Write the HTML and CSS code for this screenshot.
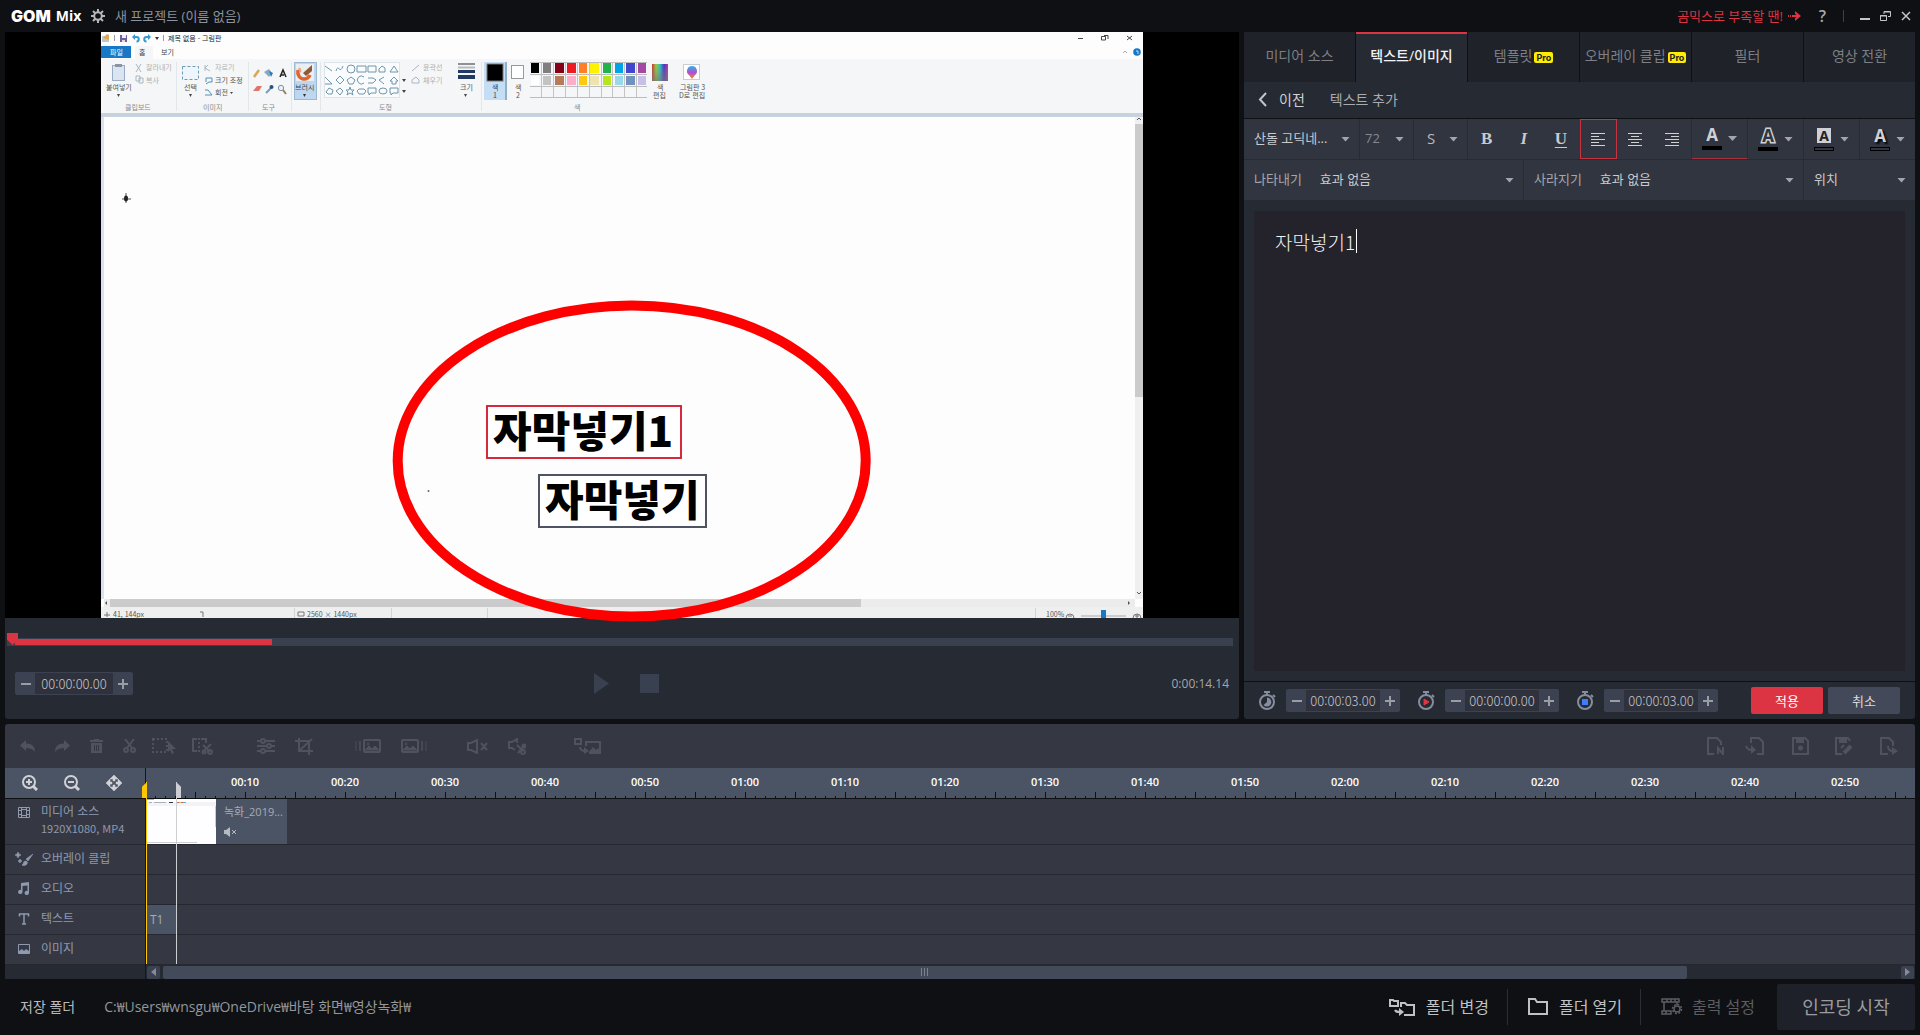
FILE: index.html
```html
<!DOCTYPE html>
<html lang="ko">
<head>
<meta charset="utf-8">
<title>GOM Mix</title>
<link rel="stylesheet" href="styles.css">
</head>
<body>
<header class="titlebar">
  <div class="logo"><span class="logo-gom">GOM</span><span class="logo-mix">Mix</span></div>
  <button class="icon-btn gear" aria-label="설정">
    <svg width="14" height="14" viewBox="0 0 14 14"><circle cx="7" cy="7" r="3.8" fill="none" stroke="#b4b6ba" stroke-width="2"/><path d="M7 0v3M7 11v3M0 7h3M11 7h3M2 2l2.200 2.200M9.800 9.800L12 12M12 2L9.800 4.200M2 12l2.200-2.200" stroke="#b4b6ba" stroke-width="2"/></svg>
  </button>
  <h1 class="project">새 프로젝트 (이름 없음)</h1>
  <a class="promo" href="#">곰믹스로 부족할 땐!
    <svg width="13" height="10" viewBox="0 0 13 10"><path d="M0 5h1M2 5h1M4 5h5" stroke="#dc3442" stroke-width="2"/><path d="M7 0l6 5-6 5V7.500L9 5 7 2.500z" fill="#dc3442"/></svg></a>
  <button class="icon-btn help" aria-label="도움말">?</button>
  <span class="title-sep"></span>
  <div class="win-buttons">
    <button class="icon-btn" aria-label="최소화"><svg width="10" height="10" viewBox="0 0 10 10"><path d="M0 8h10" stroke="#c4c6ca" stroke-width="2"/></svg></button>
    <button class="icon-btn" aria-label="이전 크기로"><svg width="11" height="10" viewBox="0 0 11 10" fill="none" stroke="#c4c6ca"><path d="M.5 4.500h6v5h-6zM4 3V.5h6.500v5H8M4 1h6M0 5h7"/></svg></button>
    <button class="icon-btn" aria-label="닫기"><svg width="10" height="10" viewBox="0 0 10 10"><path d="M1 1l8 8M9 1L1 9" stroke="#c4c6ca" stroke-width="1.500"/></svg></button>
  </div>
</header>

<main class="workspace">
  <section class="preview" aria-label="미리보기">
    <div class="stage">
      <svg class="frame" viewBox="101 32 1042 586">
        <rect x="101" y="32" width="1042" height="586" fill="#fdfdfd"/>
        <rect x="101" y="59" width="1042" height="54" fill="#f4f6f7"/>
        <rect x="101" y="113" width="1042" height="4" fill="#c8d2de"/>
        <rect x="101" y="117" width="3" height="482" fill="#d9e2f3"/>
        <g class="quick">
          <path d="M102 36h7v6h-7z" fill="#b9c7cf"/><path d="M103 38l4-4 2 1v5z" fill="#e0a64c"/>
          <path d="M114.500 35v6M163.500 35v6" stroke="#999"/>
          <path d="M120 35h7v7h-7z" fill="#6f5f9c"/><path d="M122 35h4v3h-4z" fill="#eee"/><path d="M122 40h3v2h-3z" fill="#ddd"/>
          <path d="M134 37h2.500a2 2 0 0 1 0 4.500M149 37h-2.500a2 2 0 0 0 0 4.500" fill="none" stroke="#2f9bd2" stroke-width="2"/>
          <path d="M132 37l3-3v6zM151 37l-3-3v6z" fill="#2f9bd2"/><path d="M155 37h4l-2 3z" fill="#333"/>
          <text x="168" y="41" font-size="7" fill="#222">제목 없음 - 그림판</text>
        </g>
        <rect x="101" y="46" width="30" height="12" fill="#1778c6"/>
        <rect x="135" y="46" width="18" height="13" fill="#f4f6f7"/>
        <g font-size="7" fill="#444"><text x="110" y="55" fill="#fff">파일</text><text x="139" y="55">홈</text><text x="161" y="55">보기</text></g>
        <g fill="none" stroke="#444"><path d="M1078 38.500h5M1101.500 36.500h4v3.500h-4zM1104 35.500h4v3.500M1127 36l5 4M1132 36l-5 4"/><path d="M1123 53l2-2 2 2" stroke="#aaa"/></g>
        <circle cx="1137" cy="52" r="3.800" fill="#1676c8"/><path d="M1136 51h2v3" stroke="#bfe0f5" fill="none"/>
        <path d="M176.500 62v49M248.500 62v49M291.500 62v49M320.500 62v49M481.500 62v49" stroke="#e4e7ea"/>
        <g font-size="7" fill="#8a8a8a"><text x="125" y="110">클립보드</text><text x="203" y="110">이미지</text><text x="262" y="110">도구</text><text x="379" y="110">도형</text><text x="574" y="110">색</text></g>
        <rect x="112.500" y="65.500" width="12" height="15" fill="#dbe5f2" stroke="#9aabc4"/><path d="M115 64h7v3h-7z" fill="#8996aa"/>
        <g font-size="7" fill="#555"><text x="106" y="90">붙여넣기</text><text x="184" y="90">선택</text><text x="215" y="83">크기 조정</text><text x="215" y="95">회전</text><text x="460" y="90">크기</text><text x="515" y="90">색</text><text x="516" y="98">2</text><text x="657" y="90">색</text><text x="653" y="98">편집</text><text x="680" y="90">그림판 3</text><text x="679" y="98">D로 편집</text></g>
        <g font-size="7" fill="#b0b0b0"><text x="146" y="70">잘라내기</text><text x="146" y="83">복사</text><text x="215" y="70">자르기</text><text x="423" y="70">윤곽선</text><text x="423" y="83">채우기</text></g>
        <g fill="#444"><path d="M117 94h3l-1.500 3zM189 94h3l-1.500 3zM464 94h3l-1.500 3zM230 92h3l-1.500 2zM402 79h4l-2 3zM402 90h4l-2 3z"/></g>
        <path d="M136 64l5 8M141 64l-5 8M136 76h4v5h-4zM139 78h4v5h-4zM205 65v6M208 65l-3 3 5 3M412 71l7-6M412 80l4-3 3 3v3h-7z" fill="none" stroke="#a9b6c4"/>
        <path d="M206 82v-4h6v4h-3l-3 2M205 95h7l-4-5h-3" fill="none" stroke="#4a93b5"/>
        <rect x="182.500" y="66.500" width="16" height="13" fill="#eef6fb" stroke="#6e9bb8" stroke-dasharray="3 2"/>
        <path d="M254 77l5-7" stroke="#d8a655" stroke-width="2.500"/><path d="M264 72l5-3 3 4-3 4z" fill="#8aa7c2"/><path d="M269 71l4 2-2 4z" fill="#2a7abf"/>
        <path d="M280 77l3-7 3 7M281 75h3" fill="none" stroke="#222" stroke-width="1.500"/><path d="M253 91l4-5h5l-3 5z" fill="#e0746c"/><path d="M266 93l5-5" stroke="#7c98b4" stroke-width="2"/><circle cx="271.500" cy="87" r="2" fill="#254f85"/>
        <circle cx="281" cy="88" r="2.700" fill="#e6f0f7" stroke="#8296a8"/><path d="M283 90l3 4" stroke="#a07d5c" stroke-width="2"/>
        <rect x="294.500" y="62.500" width="22" height="37" fill="#bdd7f1" stroke="#9bb8d4"/><rect x="296" y="64" width="18" height="17" fill="#e9eef2"/>
        <path d="M298 70c-1 5 2 9 6 9 3 0 5-2 6-4" fill="none" stroke="#e0642c" stroke-width="3.500"/><path d="M298 69c2-3 4 0 3 4z" fill="#f0a07a"/><path d="M303 73l9-8v6l-6 5z" fill="#8d5a34"/>
        <text x="295" y="90" font-size="7" fill="#444">브러시</text><path d="M303 94h3l-1.500 3z" fill="#333"/>
        <rect x="324.500" y="62.500" width="75" height="35" fill="#fafbfc" stroke="#dfe4e8"/>
        <g fill="none" stroke="#6f96ac">
          <path d="M325 66l7 5M336 71c2-8 4 4 7-5M357 66h9v6h-9zM368 66h8v6h-8zM379 72v-3l3-3 3 2v4zM390 72l4-6 4 6zM325 77l7 7h-7M336 80l4-4 4 4-4 4zM368 78h5l3 2-3 3h-5M384 77l-5 3 5 4M390 81l4-4 4 4h-2v3h-4v-3zM326 92l3-4 4 2-1 4h-4zM336 91l4-3 3 3-3 4zM347 95l1-3-2-2h3l1-3 1 3h3l-2 2 1 3-3-2zM357 91l2-2h5l2 2-2 3h-5zM368 88h8v5h-5l-2 2v-2h-1zM390 88h8v5h-5l-2 2v-2h-1z"/>
          <circle cx="351" cy="69" r="4"/><path d="M347 80l4-3 4 3-2 4h-4zM364 77a4 4 0 1 0 0 6"/><ellipse cx="383" cy="91" rx="4" ry="3"/>
        </g>
        <path d="M458 64h17" stroke="#909090" stroke-width="2"/><path d="M458 67.500h17" stroke="#bbb" stroke-width="2"/><path d="M458 71.500h17" stroke="#1f3b63" stroke-width="3"/><path d="M458 77h17" stroke="#1f3b63" stroke-width="4"/>
        <rect x="484" y="62" width="22" height="38" fill="#c5def6"/><path d="M506 62v38" stroke="#8fb0c8" stroke-width="2"/><rect x="487" y="64" width="16" height="17" fill="#000" stroke="#777"/>
        <g font-size="7" fill="#345"><text x="492" y="90">색</text><text x="493" y="98">1</text></g>
        <rect x="511.500" y="65.500" width="12" height="13" fill="#fff" stroke="#999"/>
        <path d="M530 62.500h117M530 74.500h117M530 86.500h117M530 97.500h117" stroke="#bdbdbd"/>
        <path d="M541.500 63v34M553.500 63v34M565.500 63v34M577.500 63v34M589.500 63v34M601.500 63v34M612.500 63v34M624.500 63v34M636.500 63v34" stroke="#c4c4c4"/>
        <g>
          <path d="M531 63h8v10h-8z" fill="#000"/><path d="M543 63h8v10h-8z" fill="#7f7f7f"/><path d="M555 63h9v10h-9z" fill="#880015"/><path d="M567 63h9v10h-9z" fill="#ed1c24"/><path d="M579 63h8v10h-8z" fill="#ff7f27"/><path d="M590 63h9v10h-9z" fill="#fff200"/><path d="M603 63h8v10h-8z" fill="#22b14c"/><path d="M615 63h8v10h-8z" fill="#00a2e8"/><path d="M626 63h9v10h-9z" fill="#3f48cc"/><path d="M638 63h8v10h-8z" fill="#a349a4"/>
          <path d="M531 76h8v9h-8z" fill="#fff"/><path d="M543 76h8v9h-8z" fill="#c3c3c3"/><path d="M555 76h9v9h-9z" fill="#b97a57"/><path d="M567 76h9v9h-9z" fill="#ffaec9"/><path d="M579 76h8v9h-8z" fill="#ffc90e"/><path d="M590 76h9v9h-9z" fill="#efe4b0"/><path d="M603 76h8v9h-8z" fill="#b5e61d"/><path d="M615 76h8v9h-8z" fill="#99d9ea"/><path d="M626 76h9v9h-9z" fill="#7092be"/><path d="M638 76h8v9h-8z" fill="#c8bfe7"/>
        </g>
        <defs>
          <linearGradient id="hue"><stop offset="0" stop-color="#c33"/><stop offset=".25" stop-color="#9c3"/><stop offset=".5" stop-color="#2bc4c4"/><stop offset=".75" stop-color="#43c"/><stop offset="1" stop-color="#c38"/></linearGradient>
          <linearGradient id="dim" x2="0" y2="1"><stop offset="0" stop-color="#888" stop-opacity="0"/><stop offset="1" stop-color="#777" stop-opacity=".7"/></linearGradient>
          <linearGradient id="drop" x2="0" y2="1"><stop offset="0" stop-color="#29b6f0"/><stop offset=".5" stop-color="#b04fd0"/><stop offset="1" stop-color="#f58a1f"/></linearGradient>
        </defs>
        <rect x="652" y="64" width="16" height="17" fill="url(#hue)"/><rect x="652" y="64" width="16" height="17" fill="url(#dim)"/>
        <rect x="683.500" y="64.500" width="16" height="15" fill="#fff" stroke="#ccc"/><path d="M692 66a5 5 0 0 1 3 9l-3 4-3-4a5 5 0 0 1 3-9z" fill="url(#drop)"/>
        <path d="M126 193v10M122 199h9" stroke="#555"/><ellipse cx="126" cy="198.500" rx="2" ry="3" fill="#222"/>
        <rect x="1135" y="117" width="8" height="482" fill="#f0f0f0"/><rect x="1135" y="124" width="8" height="273" fill="#cbcbcb"/>
        <path d="M1137 120l2-2 2 2M1137 592l2 2 2-2" fill="none" stroke="#555"/>
        <rect x="104" y="599" width="1031" height="8" fill="#ececec"/><rect x="110" y="599" width="751" height="8" fill="#cbcbcb"/>
        <rect x="101" y="607" width="1042" height="11" fill="#efefef"/>
        <path d="M107 601l-2 2 2 2zM1128 601l2 2-2 2z" fill="#555"/>
        <path d="M294.500 608v10M391.500 608v10M487.500 608v10M1035.500 608v10" stroke="#d4d4d4"/>
        <g font-size="7" fill="#555"><text x="113" y="617">41, 144px</text><text x="307" y="617">2560 × 1440px</text><text x="1046" y="617">100%</text></g>
        <path d="M104 615h6M107 612v5M200 612h3v5M298 612h6v4h-6z" fill="none" stroke="#777"/>
        <path d="M1081 616h45" stroke="#ccc" stroke-width="2"/><path d="M1101 610h5v8h-5z" fill="#1778c6"/>
        <path d="M1066 618a4 4 0 0 1 8 0M1068 616h4M1133 618a4 4 0 0 1 8 0M1135 616h4M1137 614v4" fill="none" stroke="#777"/>
        <circle cx="428.500" cy="491" r="1" fill="#567"/>
        <rect x="487" y="406" width="194" height="52" fill="#fff" stroke="#d5293c" stroke-width="2"/>
        <rect x="539" y="475" width="167" height="52" fill="#fff" stroke="#4f5464" stroke-width="2"/>
        <g class="caption"><text x="493" y="447">자막넣기1</text><text x="545" y="516">자막넣기</text></g>
        <ellipse cx="631.700" cy="461" rx="234" ry="155.500" fill="none" stroke="#f00" stroke-width="10"/>
      </svg>
    </div>
    <div class="player">
      <input class="seek" type="range" min="0" max="100" value="0" aria-label="재생 위치">
      <div class="transport">
        <div class="stepper wide">
          <button aria-label="시간 감소"><svg width="10" height="10" viewBox="0 0 10 10"><path d="M0 5h10" stroke="#9b9da4" stroke-width="2"/></svg></button>
          <input type="text" value="00:00:00.00" aria-label="현재 시간">
          <button aria-label="시간 증가"><svg width="10" height="10" viewBox="0 0 10 10"><path d="M0 5h10M5 0v10" stroke="#9b9da4" stroke-width="2"/></svg></button>
        </div>
        <div class="play-buttons">
          <button class="icon-btn" aria-label="재생"><svg width="15" height="21" viewBox="0 0 15 21"><path d="M0 0l15 10.500L0 21z" fill="#394150"/></svg></button>
          <button class="icon-btn" aria-label="정지"><svg width="19" height="19" viewBox="0 0 19 19"><path d="M0 0h19v19H0z" fill="#394150"/></svg></button>
        </div>
        <span class="duration">0:00:14.14</span>
      </div>
    </div>
  </section>

  <section class="editor" aria-label="텍스트 편집">
    <nav class="tabs">
      <button>미디어 소스</button>
      <button class="active">텍스트/이미지</button>
      <button>템플릿<span class="pro">Pro</span></button>
      <button>오버레이 클립<span class="pro">Pro</span></button>
      <button>필터</button>
      <button>영상 전환</button>
    </nav>
    <div class="crumb">
      <button class="back"><svg width="9" height="15" viewBox="0 0 9 15"><path d="M8 1L2 7.500 8 14" fill="none" stroke="#c3c5ca" stroke-width="2"/></svg>이전</button>
      <h2>텍스트 추가</h2>
    </div>
    <div class="format">
      <div class="drop font"><select aria-label="글꼴"><option>산돌 고딕네...</option></select></div>
      <div class="drop narrow muted"><select aria-label="크기"><option>72</option></select></div>
      <div class="drop narrow serif"><select aria-label="스타일"><option>S</option></select></div>
      <div class="tools">
        <button class="letter bold" aria-label="굵게">B</button>
        <button class="letter italic" aria-label="기울임">I</button>
        <button class="letter under" aria-label="밑줄">U</button>
        <button class="selected" aria-label="왼쪽 맞춤"><svg width="14" height="13" viewBox="0 0 14 13"><path d="M0 .5h14M0 3.500h8M0 6.500h14M0 9.500h8M0 12.500h14" stroke="#d0d1d4"/></svg></button>
        <button aria-label="가운데 맞춤"><svg width="14" height="13" viewBox="0 0 14 13"><path d="M0 .5h14M3 3.500h8M0 6.500h14M3 9.500h8M0 12.500h14" stroke="#d0d1d4"/></svg></button>
        <button aria-label="오른쪽 맞춤"><svg width="14" height="13" viewBox="0 0 14 13"><path d="M0 .5h14M6 3.500h8M0 6.500h14M6 9.500h8M0 12.500h14" stroke="#d0d1d4"/></svg></button>
      </div>
      <button class="color current" aria-label="글자 색"><span class="swatch fill"><b>A</b><i></i></span></button>
      <button class="color" aria-label="윤곽선 색"><span class="swatch outline"><b>A</b><i></i></span></button>
      <button class="color" aria-label="배경 색"><span class="swatch box"><b>A</b><i></i></span></button>
      <button class="color" aria-label="그림자 색"><span class="swatch shadow"><b>A</b><i></i></span></button>
    </div>
    <div class="effects">
      <div class="effect"><label for="fx-in">나타내기</label><div class="drop"><select id="fx-in"><option>효과 없음</option></select></div></div>
      <div class="effect"><label for="fx-out">사라지기</label><div class="drop"><select id="fx-out"><option>효과 없음</option></select></div></div>
      <div class="drop place"><select aria-label="위치"><option>위치</option></select></div>
    </div>
    <div class="note-wrap"><div class="note" contenteditable="true" role="textbox" aria-multiline="true" aria-label="텍스트 입력">자막넣기1<span class="caret"></span></div></div>
    <div class="timing">
      <div class="time-field">
        <svg width="18" height="20" viewBox="0 0 18 20"><g fill="none" stroke="#858d9f" stroke-width="2"><circle cx="8" cy="11" r="7"/><path d="M5 1h6M8 1v3M14 4l2 2"/></g><path d="M8 6.500a4.500 4.500 0 1 1-3.500 7.500L8 11z" fill="#858d9f"/></svg>
        <div class="stepper">
          <button aria-label="길이 감소"><svg width="10" height="10" viewBox="0 0 10 10"><path d="M0 5h10" stroke="#9b9da4" stroke-width="2"/></svg></button>
          <input type="text" value="00:00:03.00" aria-label="길이">
          <button aria-label="길이 증가"><svg width="10" height="10" viewBox="0 0 10 10"><path d="M0 5h10M5 0v10" stroke="#9b9da4" stroke-width="2"/></svg></button>
        </div>
      </div>
      <div class="time-field">
        <svg width="18" height="20" viewBox="0 0 18 20"><g fill="none" stroke="#858d9f" stroke-width="2"><circle cx="8" cy="11" r="7"/><path d="M5 1h6M8 1v3M14 4l2 2"/></g><path d="M6 8l5 3-5 3z" fill="#e03542" stroke="#e03542"/></svg>
        <div class="stepper">
          <button aria-label="시작 감소"><svg width="10" height="10" viewBox="0 0 10 10"><path d="M0 5h10" stroke="#9b9da4" stroke-width="2"/></svg></button>
          <input type="text" value="00:00:00.00" aria-label="시작 시간">
          <button aria-label="시작 증가"><svg width="10" height="10" viewBox="0 0 10 10"><path d="M0 5h10M5 0v10" stroke="#9b9da4" stroke-width="2"/></svg></button>
        </div>
      </div>
      <div class="time-field">
        <svg width="18" height="20" viewBox="0 0 18 20"><g fill="none" stroke="#858d9f" stroke-width="2"><circle cx="8" cy="11" r="7"/><path d="M5 1h6M8 1v3M14 4l2 2"/></g><path d="M5 8h6v6H5z" fill="#3f7cff"/></svg>
        <div class="stepper">
          <button aria-label="종료 감소"><svg width="10" height="10" viewBox="0 0 10 10"><path d="M0 5h10" stroke="#9b9da4" stroke-width="2"/></svg></button>
          <input type="text" value="00:00:03.00" aria-label="종료 시간">
          <button aria-label="종료 증가"><svg width="10" height="10" viewBox="0 0 10 10"><path d="M0 5h10M5 0v10" stroke="#9b9da4" stroke-width="2"/></svg></button>
        </div>
      </div>
      <div class="confirm"><button class="apply">적용</button><button>취소</button></div>
    </div>
  </section>
</main>

<section class="timeline" aria-label="타임라인">
  <div class="toolbar">
    <div class="cluster tight">
      <div class="cluster">
        <button class="icon-btn" aria-label="실행 취소"><svg width="15" height="12" viewBox="0 0 15 12"><path d="M0 5.500L6 0v3.500c6 0 9 3 9 8.500-2-3-5-4-9-4V11z" fill="currentColor"/></svg></button>
        <button class="icon-btn" aria-label="다시 실행"><svg width="15" height="12" viewBox="0 0 15 12"><path d="M15 5.500L9 0v3.500C3 3.500 0 6.500 0 12c2-3 5-4 9-4V11z" fill="currentColor"/></svg></button>
        <button class="icon-btn" aria-label="삭제"><svg width="13" height="14" viewBox="0 0 13 14"><path d="M4 1V0h5v1h4v2H0V1zM1 4h11v10H1z" fill="currentColor"/><path d="M4.500 6v6M6.500 6v6M8.500 6v6" stroke="#353843"/></svg></button>
        <button class="icon-btn" aria-label="자르기"><svg width="13" height="14" viewBox="0 0 13 14" fill="none" stroke="currentColor" stroke-width="2"><path d="M2 0l7 9M11 0L4 9"/><circle cx="3" cy="11" r="2"/><circle cx="10" cy="11" r="2"/></svg></button>
      </div>
      <div class="cluster tight">
        <button class="icon-btn" aria-label="영역 선택"><svg width="24" height="16" viewBox="0 0 24 16"><path d="M1 1h14v13H1z" fill="none" stroke="currentColor" stroke-width="2" stroke-dasharray="2 2"/><path d="M16 3l8 8h-4l2 4-2 1-2-4-2 2z" fill="currentColor"/></svg></button>
        <button class="icon-btn" aria-label="구간 분할"><svg width="21" height="17" viewBox="0 0 21 17" fill="none" stroke="currentColor" stroke-width="2"><path d="M5 1H1v12h4"/><path d="M7 0v16" stroke-dasharray="2 2"/><path d="M9 1h5v4M11 7l7 7M19 6l-8 8"/><circle cx="18" cy="14" r="2"/><circle cx="12" cy="14" r="1.500"/></svg></button>
      </div>
    </div>
    <div class="cluster adjust">
      <button class="icon-btn" aria-label="조정"><svg width="18" height="16" viewBox="0 0 18 16" stroke="currentColor" stroke-width="2" fill="#353843"><path d="M0 3h18M0 8h18M0 13h18"/><circle cx="6" cy="3" r="2"/><circle cx="12" cy="8" r="2"/><circle cx="6" cy="13" r="2"/></svg></button>
      <button class="icon-btn" aria-label="크롭"><svg width="18" height="17" viewBox="0 0 18 17" fill="none" stroke="currentColor" stroke-width="2"><path d="M4 0v13h14M0 3h14v14M4 13L17 1"/></svg></button>
    </div>
    <div class="cluster">
      <button class="icon-btn" aria-label="페이드 인"><svg width="26" height="14" viewBox="0 0 26 14" fill="none" stroke="currentColor"><path d="M1 2v10" stroke-opacity=".4" stroke-width="2"/><path d="M5 2v10" stroke-opacity=".7" stroke-width="2"/><rect x="9" y="1" width="16" height="12" rx="1" stroke-width="2"/><path d="M10 11l4-4 3 3 3-3 4 4z" fill="currentColor"/><circle cx="13" cy="5" r="1"/></svg></button>
      <button class="icon-btn" aria-label="페이드 아웃"><svg width="26" height="14" viewBox="0 0 26 14" fill="none" stroke="currentColor"><path d="M25 2v10" stroke-opacity=".4" stroke-width="2"/><path d="M21 2v10" stroke-opacity=".7" stroke-width="2"/><rect x="1" y="1" width="16" height="12" rx="1" stroke-width="2"/><path d="M2 11l4-4 3 3 3-3 4 4z" fill="currentColor"/><circle cx="5" cy="5" r="1"/></svg></button>
    </div>
    <div class="cluster sound">
      <button class="icon-btn" aria-label="음소거"><svg width="21" height="15" viewBox="0 0 21 15" fill="none" stroke="currentColor" stroke-width="2"><path d="M1 4h3l6-3v13l-6-3H1zM14 4l6 7M20 4l-6 7"/></svg></button>
      <button class="icon-btn" aria-label="음소거 구간"><svg width="18" height="17" viewBox="0 0 18 17" fill="none" stroke="currentColor" stroke-width="2"><path d="M9 5V1L4 4H1v6h3l3 2M9 7l6 6M17 7l-7 8"/><circle cx="15" cy="14" r="2"/><circle cx="16" cy="8" r="1.500"/></svg></button>
    </div>
    <div class="cluster pip">
      <button class="icon-btn" aria-label="오버레이 추가"><svg width="27" height="16" viewBox="0 0 27 16" fill="none" stroke="currentColor" stroke-width="2"><path d="M1 1h6v5H1zM12 8V4h14v11H15M6 9c0 3 2 4 6 4"/><path d="M10 9l5 4-5 3zM15 14l4-5 3 3 2-2 2 4z" fill="currentColor" stroke="none"/></svg></button>
    </div>
    <div class="files">
      <button class="icon-btn" aria-label="새 프로젝트"><svg width="17" height="18" viewBox="0 0 17 18" fill="none" stroke="currentColor" stroke-width="2"><path d="M7 17H1V1h9l4 4v3M11 17v-6l5 6v-7"/></svg></button>
      <button class="icon-btn open" aria-label="프로젝트 열기"><svg width="19" height="18" viewBox="0 0 19 18" fill="none" stroke="currentColor" stroke-width="2"><path d="M6 6V1h8l4 4v12h-6M1 9c1 3 3 4 6 4"/><path d="M6 8l5 5-5 4z" fill="currentColor" stroke="none"/></svg></button>
      <button class="icon-btn" aria-label="저장"><svg width="17" height="18" viewBox="0 0 17 18" fill="none" stroke="currentColor" stroke-width="2"><path d="M1 1h12l3 3v13H1z"/><path d="M5 1h6v4H5z" fill="currentColor"/><circle cx="8.500" cy="11" r="1.500" fill="currentColor"/></svg></button>
      <button class="icon-btn" aria-label="다른 이름으로 저장"><svg width="19" height="18" viewBox="0 0 19 18" fill="none" stroke="currentColor" stroke-width="2"><path d="M7 17H1V1h12l2 3M6 11l3-3"/><path d="M5 1h6v4H5z" fill="currentColor"/><path d="M9 16l7-7" stroke-width="4"/></svg></button>
      <button class="icon-btn" aria-label="내보내기"><svg width="18" height="18" viewBox="0 0 18 18" fill="none" stroke="currentColor" stroke-width="2"><path d="M8 17H1V1h8l4 4v4M8 9c0 4 2 5 5 5"/><path d="M12 10l6 4-6 4z" fill="currentColor" stroke="none"/></svg></button>
    </div>
  </div>
  <div class="tracks">
    <div class="heads">
      <div class="zoomers">
        <button class="icon-btn" aria-label="확대"><svg width="16" height="16" viewBox="0 0 16 16" fill="none" stroke="#d0d2d6" stroke-width="2"><circle cx="7" cy="7" r="6"/><path d="M4 7h6M7 4v6"/><path d="M11 11l4 4" stroke-width="3"/></svg></button>
        <button class="icon-btn" aria-label="축소"><svg width="16" height="16" viewBox="0 0 16 16" fill="none" stroke="#d0d2d6" stroke-width="2"><circle cx="7" cy="7" r="6"/><path d="M4 7h6"/><path d="M11 11l4 4" stroke-width="3"/></svg></button>
        <button class="icon-btn" aria-label="전체 보기"><svg width="16" height="16" viewBox="0 0 16 16" fill="#d0d2d6"><path d="M8 0l4 4H9v2H7V4H4zM8 16l-4-4h3v-2h2v2h3zM0 8l4-4v3h2v2H4v3zM16 8l-4 4V9h-2V7h2V4z" stroke="#d0d2d6" stroke-width=".5"/></svg></button>
      </div>
      <div class="head media"><svg width="12" height="11" viewBox="0 0 12 11" fill="none" stroke="#8f99b0"><path d="M.5.500h11v10H.5zM3.500 0v11M8.500 0v11M3 2.500h6M3 8.500h6M0 3.500h3M0 7.500h3M9 3.500h3M9 7.500h3"/></svg><div><p>미디어 소스</p><small>1920X1080, MP4</small></div></div>
      <div class="head"><svg width="18" height="14" viewBox="0 0 18 14" fill="#8f99b0"><path d="M3 0l1 2 2 1-2 1-1 2-1-2-2-1 2-1zM5 7l.700 1.300L7 9l-1.300.700L5 11l-.700-1.300L3 9l1.300-.700zM18 2l-5 7-2-2zM7 13c2-1 1-4 3.500-4 2 0 2.500 2 1 3.500-1 1-3 1.500-4.500.5z" stroke="#8f99b0" stroke-width=".6"/></svg><p>오버레이 클립</p></div>
      <div class="head"><svg width="12" height="13" viewBox="0 0 12 13" fill="#8f99b0"><path d="M3 1l8-1v11a2.200 2 0 1 1-1.500-2V3.500L4.500 4v6a2.200 2 0 1 1-1.500-2z"/></svg><p>오디오</p></div>
      <div class="head"><svg width="12" height="12" viewBox="0 0 12 12"><path d="M1.500 3.500V1h9v2.500M6 1v10M4 11h4" fill="none" stroke="#8f99b0" stroke-width="1.500"/></svg><p>텍스트</p></div>
      <div class="head"><svg width="12" height="10" viewBox="0 0 12 10"><path d="M.5.5h11v9H.5z" fill="none" stroke="#8f99b0"/><path d="M1 9V7l3-2 2 2 2-2 3 2v2z" fill="#8f99b0"/></svg><p>이미지</p></div>
      <div class="head-foot"></div>
    </div>
    <div class="lanes">
      <ol class="ruler"><li>00:10</li><li>00:20</li><li>00:30</li><li>00:40</li><li>00:50</li><li>01:00</li><li>01:10</li><li>01:20</li><li>01:30</li><li>01:40</li><li>01:50</li><li>02:00</li><li>02:10</li><li>02:20</li><li>02:30</li><li>02:40</li><li>02:50</li></ol>
      <div class="lane media">
        <svg width="69" height="45" viewBox="0 0 69 45"><path d="M0 0h69v45H0z" fill="#fefdff"/><path d="M0 3h69v4H0z" fill="#f1f3f6"/><path d="M0 .5h7M2 3.500h3M7 3.500h12" stroke="#a9b1bd"/><path d="M22 3.500h4" stroke="#334"/><path d="M30 3.500h2M34 3.500h2" stroke="#c66"/><path d="M32 3.500h2" stroke="#cb4"/><path d="M36 3.500h3" stroke="#6ac"/><path d="M68.500 7v21" stroke="#ccc"/><path d="M0 43.500h50" stroke="#cfcfcf"/></svg>
        <div class="clip"><span>녹화_2019...</span><svg width="13" height="10" viewBox="0 0 13 10"><path d="M0 3h2l4-3v10L2 7H0z" fill="#b5b9c2"/><path d="M8 3l4 4M12 3L8 7" stroke="#b5b9c2"/></svg></div>
      </div>
      <div class="lane"></div>
      <div class="lane"></div>
      <div class="lane"><div class="clip text">T1</div></div>
      <div class="lane"></div>
      <div class="scroll">
        <button aria-label="왼쪽으로"><svg width="5" height="8" viewBox="0 0 5 8"><path d="M5 0v8L0 4z" fill="#848b9b"/></svg></button>
        <div class="rail"><div class="thumb"><svg width="8" height="8" viewBox="0 0 8 8"><path d="M.5 0v8M3.500 0v8M6.500 0v8" stroke="#7a8190"/></svg></div></div>
        <button aria-label="오른쪽으로"><svg width="5" height="8" viewBox="0 0 5 8"><path d="M0 0v8l5-4z" fill="#848b9b"/></svg></button>
      </div>
      <div class="marker start"></div>
      <div class="marker end"></div>
    </div>
  </div>
</section>

<footer class="statusbar">
  <span class="save-label">저장 폴더</span>
  <span class="path">C:₩Users₩wnsgu₩OneDrive₩바탕 화면₩영상녹화₩</span>
  <div class="actions">
    <button><svg width="26" height="18" viewBox="0 0 26 18" fill="none" stroke="#bfc1c5" stroke-width="2"><path d="M1 2h3l1 1h4v5H1zM12 9V5h4l2 2h7v10H15M6 12c1 2 2 2 5 2"/><path d="M10 10l5 4-5 4z" fill="#bfc1c5" stroke="none"/></svg>폴더 변경</button>
    <button><svg width="20" height="17" viewBox="0 0 20 17" fill="none" stroke="#bfc1c5" stroke-width="2"><path d="M1 1h6l2 3h10v12H1z"/></svg>폴더 열기</button>
    <button class="disabled"><svg width="22" height="17" viewBox="0 0 22 17" fill="none" stroke="#5b5d61" stroke-width="1.500"><path d="M1 1h17v3H1zM1 13h9v3H1zM3 4v9M16 4v3M6 1v3M10 1v3M14 1v3M5 13v3"/><circle cx="16" cy="11" r="3"/><circle cx="16" cy="11" r="4.500" stroke-dasharray="2 1.500"/></svg>출력 설정</button>
  </div>
  <button class="encode">인코딩 시작</button>
</footer>
</body>
</html>
```
FILE: styles.css
```css
:root {
  --bg: #0e1014;
  --panel: #262a32;
  --bar: #31353f;
  --track: #353843;
  --slate: #4b5465;
  --red: #dc3442;
  --text: #b8babf;
  --ui: "Open Sans", "Noto Sans CJK KR", sans-serif;
}
* { box-sizing: border-box; }
body {
  margin: 0;
  height: 100vh;
  min-height: 720px;
  display: flex;
  flex-direction: column;
  overflow: hidden;
  background: var(--bg);
  color: var(--text);
  font: 13px/16px var(--ui);
}
button, input, select {
  margin: 0;
  padding: 0;
  border: 0;
  border-radius: 0;
  background: none;
  color: inherit;
  font: inherit;
}
h1, h2, p, ol { margin: 0; padding: 0; font: inherit; }
svg { display: block; flex: none; }
.icon-btn { display: flex; align-items: center; justify-content: center; }

/* title bar */
.titlebar { flex: none; height: 32px; display: flex; align-items: center; padding: 0 9px 0 11px; }
.logo { display: flex; align-items: center; gap: 5px; color: #fff; width: 80px; }
.logo-gom { font: 900 16px/16px Inter, sans-serif; }
.logo-mix { font: 700 14px/16px "Open Sans", sans-serif; }
.project { margin-left: 10px; color: #8f949c; }
.promo { margin-left: auto; display: flex; align-items: center; gap: 5px; color: var(--red); text-decoration: none; }
.help { margin-left: 17px; width: 9px; font-size: 16px; font-weight: 600; color: #a8aaae; }
.title-sep { width: 1px; height: 12px; margin: 0 16px; background: #3e4046; }
.win-buttons { display: flex; gap: 10px; }

/* workspace */
.workspace { flex: 1; min-height: 0; display: grid; grid-template-columns: minmax(0, 1fr) 671px; gap: 5px; padding: 0 5px; }
.preview, .editor { display: flex; flex-direction: column; min-height: 0; background: var(--panel); border-radius: 0 0 3px 3px; }
.stage { flex: 1; min-height: 0; background: #000; }
.frame { width: 100%; height: 100%; overflow: visible; position: relative; font-family: "Noto Sans CJK KR", sans-serif; }
.caption { font-size: 42px; font-weight: 900; fill: #000; }
.player { height: 101px; padding: 15px 6px 0 2px; }
.seek { display: block; width: 100%; height: 13px; appearance: none; }
.seek::-webkit-slider-runnable-track {
  height: 8px;
  margin-top: 5px;
  background: linear-gradient(var(--red), var(--red)) 8px 1px / 265px 6px no-repeat, #39404e;
  background-size: 21% 6px, auto;
}
.seek::-webkit-slider-thumb {
  appearance: none;
  width: 11px;
  height: 12px;
  margin-top: -5px;
  background: var(--red);
  clip-path: polygon(0 0, 100% 0, 100% 55%, 50% 100%, 0 55%);
}
.transport { display: grid; grid-template-columns: 1fr auto 1fr; align-items: center; height: 23px; margin: 26px 4px 0 8px; }
.play-buttons { display: flex; align-items: center; gap: 31px; padding-left: 9px; }
.duration { justify-self: end; font-size: 12px; color: #a4a6ab; }

.stepper { display: flex; width: 114px; height: 23px; background: #3c4251; border: 1px solid #3c4251; border-radius: 2px; }
.stepper.wide { width: 118px; }
.stepper button { width: 19px; display: flex; align-items: center; justify-content: center; }
.stepper input { flex: 1; min-width: 0; background: #2f323c; color: #c4c6cb; text-align: center; font-family: "Noto Sans CJK KR", sans-serif; font-weight: 300; }

/* text editor panel */
.tabs { height: 50px; display: grid; grid-template-columns: repeat(6, minmax(0, 1fr)); column-gap: 1px; background: var(--bg); flex: none; }
.tabs button { display: flex; align-items: center; justify-content: center; background: #1f2229; color: #7d7f84; font-size: 14px; white-space: nowrap; padding-bottom: 4px; border-top: 2px solid #1f2229; }
.tabs .active { background: var(--panel); border-color: var(--red); color: #f2f2f3; font-weight: 500; }
.pro { margin: 3px 0 0 2px; padding: 0 2px; height: 11px; border-radius: 2px; background: #ffec00; color: #222; font: 700 9px/11px Inter, sans-serif; }
.crumb { flex: none; height: 37px; display: flex; align-items: center; gap: 25px; padding: 0 0 1px 14px; border-bottom: 1px solid var(--bg); font-size: 14px; }
.back { display: flex; align-items: center; gap: 12px; color: #d0d1d4; }
.crumb h2 { color: #a9abb0; }
.format, .effects { flex: none; display: flex; background: var(--bar); border-bottom: 1px solid #272b33; }
.format { height: 41px; }
.effects { height: 40px; border-bottom: 0; }
.drop { display: grid; align-items: center; flex: 1; min-width: 0; }
.drop select { grid-area: 1 / 1; appearance: none; width: 100%; height: 100%; padding: 0 0 2px 10px; color: #c9cace; }
.drop::after, .color::after {
  content: "";
  width: 9px;
  height: 5px;
  background: #a2a5b0;
  clip-path: polygon(0 0, 100% 0, 50% 100%);
  pointer-events: none;
}
.drop::after { grid-area: 1 / 1; justify-self: end; margin-right: 9px; }
.drop.font { flex: 0 0 116px; border-right: 1px solid #272b33; }
.drop.narrow { flex: 0 0 54px; border-right: 1px solid #272b33; }
.drop.narrow select { padding-left: 5px; }
.muted select { color: #85888f; }
.drop.serif select { padding-left: 13px; color: #b8babf; font-size: 15px; }
.tools { flex: 1; display: grid; grid-template-columns: repeat(6, 1fr); border-right: 1px solid #272b33; }
.tools button { display: flex; align-items: center; justify-content: center; border: 1px solid transparent; }
.tools .selected { border-color: #c9323f; }
.tools .letter { font: 700 17px/18px "Liberation Serif", serif; color: #c9cace; }
.tools .italic { font-style: italic; }
.tools .under { text-decoration: underline; text-underline-offset: 3px; }
.color { flex: 0 0 56px; display: flex; align-items: center; gap: 6px; padding-left: 10px; border-right: 1px solid #272b33; }
.color:last-child { flex-basis: 55px; border-right: 0; }
.color.current { border-bottom: 1px solid #a8313d; }
.swatch { width: 20px; display: flex; flex-direction: column; align-items: center; gap: 4px; }
.swatch b { width: 14px; height: 15px; font: 700 17px/15px "Open Sans", sans-serif; color: #d0d1d4; text-align: center; }
.swatch i { width: 20px; height: 4px; background: #000; }
.outline b { color: var(--bar); -webkit-text-stroke: 3px #d0d1d4; paint-order: stroke; }
.box b { background: #d0d1d4; color: #222; font-size: 14px; }
.box i, .shadow i { background: none; border: 1px solid #000; }
.shadow b { text-shadow: 2px 2px 2px #000; }
.effect { flex: 0 0 280px; display: flex; align-items: center; border-right: 1px solid #272b33; padding-left: 10px; }
.effect .drop { height: 100%; }
.effect .drop select { padding-left: 18px; }
.effect label { padding-bottom: 2px; color: #a4a7ae; }
.note-wrap { flex: 1; min-height: 0; padding: 11px 10px 10px; display: flex; }
.note { flex: 1; display: flex; align-items: flex-start; padding: 18px 21px; background: #24232c; color: #f3f3f4; outline: 0; font: 300 19px/26px "Noto Sans CJK KR", sans-serif; }
.caret { width: 1px; height: 24px; margin-left: 1px; background: #fff; }
.timing { flex: none; height: 38px; display: flex; align-items: center; gap: 18px; padding: 0 15px; border-top: 1px solid var(--bg); }
.time-field { display: flex; align-items: center; gap: 9px; }
.confirm { margin-left: auto; display: flex; gap: 5px; }
.confirm button { width: 72px; height: 27px; border-radius: 2px; background: #434958; color: #d8d9dc; }
.confirm .apply { background: var(--red); color: #fff; }

/* timeline */
.timeline { flex: none; margin: 5px 5px 0; background: var(--track); border-radius: 3px 3px 0 0; }
.toolbar { height: 44px; display: flex; align-items: center; gap: 42px; padding: 0 17px 0 15px; color: #4f535f; }
.cluster { display: flex; align-items: center; gap: 20px; }
.cluster.tight { gap: 16px; }
.adjust { margin-left: 2px; }
.sound { margin-left: -2px; }
.pip { margin-left: 6px; }
.files { margin-left: auto; display: flex; gap: 26px; }
.files .open { margin: 0 2px 0 -5px; }
.tracks { display: grid; grid-template-columns: 140px minmax(0, 1fr); }
.heads { border-right: 1px solid #15171c; width: 141px; }
.zoomers { height: 31px; display: flex; align-items: center; gap: 26px; padding-left: 17px; background: var(--slate); border-bottom: 1px solid var(--bg); }
.head { height: 30px; display: grid; grid-template-columns: 18px 1fr; column-gap: 8px; align-items: center; justify-items: center; padding: 0 0 2px 10px; border-bottom: 1px solid #25282f; color: #8f99b0; font-size: 12px; }
.head > :last-child { justify-self: start; }
.head.media { height: 46px; align-items: start; padding-top: 5px; }
.head.media svg { margin-top: 3px; }
.head small { display: block; font: 11px/16px "Noto Sans CJK KR", sans-serif; }
.head-foot { height: 14px; background: var(--panel); }
.lanes { position: relative; min-width: 0; padding-left: 1px; }
.ruler {
  height: 31px;
  display: flex;
  overflow: hidden;
  padding: 6px 0 0 49px;
  list-style: none;
  border-bottom: 1px solid var(--bg);
  background:
    repeating-linear-gradient(90deg, transparent 0 49px, #0e1014 49px 50px) 0 100% / 100% 6px no-repeat,
    repeating-linear-gradient(90deg, transparent 0 9px, #0e1014 9px 10px) 0 100% / 100% 2px no-repeat,
    var(--slate);
  color: #fff;
  font-size: 11px;
  font-weight: 600;
}
.ruler li { flex: 0 0 100px; text-align: center; }
.lane { height: 30px; display: flex; border-bottom: 1px solid #25282f; padding-left: 1px; }
.lane.media { height: 46px; }
.clip { display: flex; flex-direction: column; gap: 7px; width: 71px; padding: 5px 0 0 8px; background: var(--slate); color: #a7abb5; font-size: 11px; white-space: nowrap; }
.clip.text { width: 29px; padding: 7px 0 0 3px; font-size: 12px; }
.scroll { height: 14px; display: flex; align-items: center; gap: 3px; padding: 0 1px; background: var(--panel); }
.scroll button { width: 13px; height: 13px; display: flex; align-items: center; justify-content: center; background: #3b414e; border-radius: 2px; }
.rail { flex: 1; }
.thumb { width: calc(88% - 3px); height: 13px; display: flex; align-items: center; justify-content: center; background: #434a59; border-radius: 2px; }
.marker { position: absolute; top: 14px; bottom: 15px; width: 1px; }
.marker::before { content: ""; position: absolute; top: 0; width: 5px; height: 16px; }
.marker.start { left: 1px; background: #ffc800; }
.marker.start::before { right: 0; background: #ffc800; clip-path: polygon(0 30%, 100% 0, 100% 100%, 0 100%); }
.marker.end { left: 31px; background: #ccced2; }
.marker.end::before { left: 0; background: #ccced2; clip-path: polygon(0 0, 100% 30%, 100% 100%, 0 100%); }

/* footer */
.statusbar { flex: none; height: 56px; display: flex; align-items: center; padding: 0 5px 1px 20px; font-size: 14px; }
.path { margin-left: 29px; color: #94969b; }
.actions { margin: 0 4px 0 auto; display: flex; }
.actions button { height: 36px; display: flex; align-items: center; gap: 11px; padding: 0 18px 0 20px; font-size: 16px; color: #bfc1c5; }
.actions button + button { border-left: 1px solid #2b2e35; }
.actions .disabled { color: #5b5d61; gap: 9px; }
.encode { width: 138px; height: 46px; border-radius: 2px; background: #1e2129; color: #9a9ca1; font-size: 18px; }
```
